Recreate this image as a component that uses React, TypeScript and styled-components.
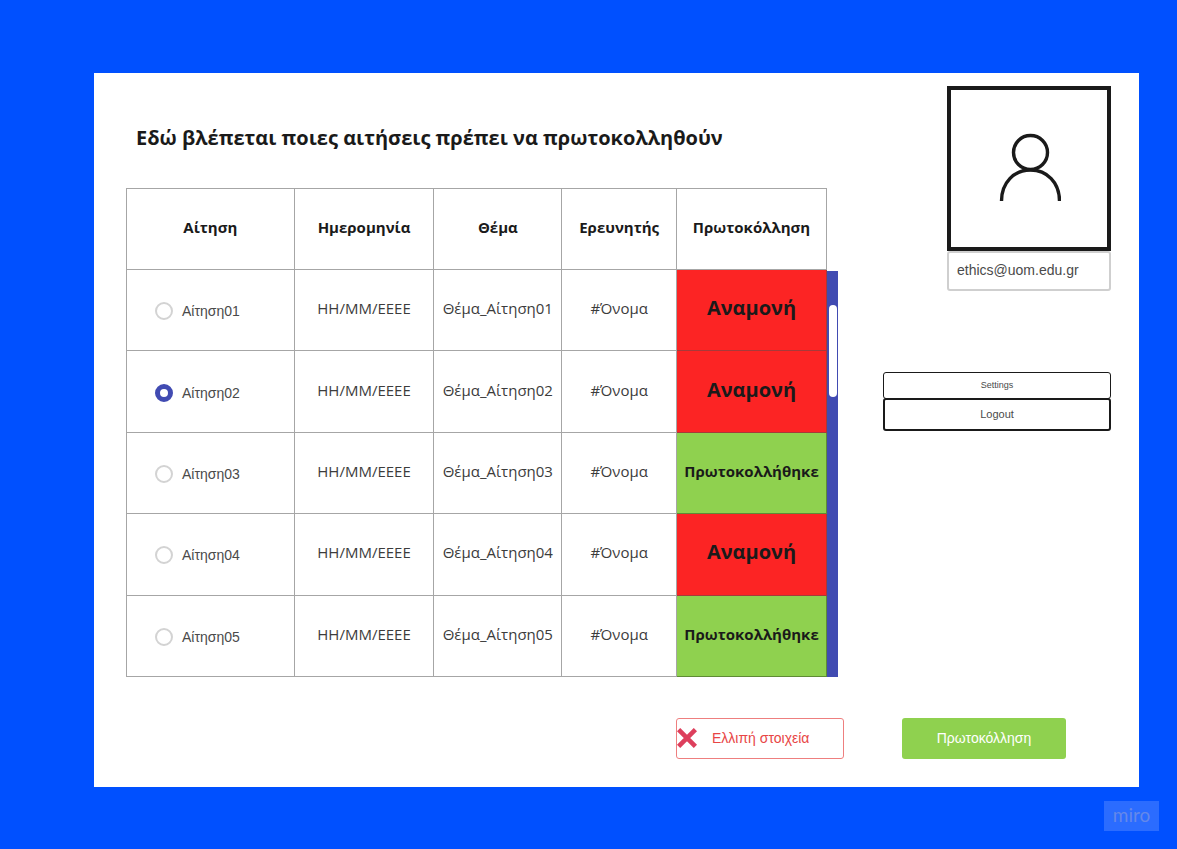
import React, { useState } from "react";
import styled, { createGlobalStyle } from "styled-components";

const GlobalStyle = createGlobalStyle`
  *, *::before, *::after { box-sizing: border-box; }
  body {
    margin: 0;
    background: #0050ff;
    color: #1a1a1a;
    font-family: "Open Sans", "Noto Sans", sans-serif;
  }
  button, input { font-family: inherit; color: inherit; }
`;

const uiFont = `"Liberation Sans", Arial, sans-serif`;

const Page = styled.div`
  min-height: 100vh;
  display: flex;
  flex-direction: column;
  padding: 73px 18px 18px 94px;
`;

const Sheet = styled.main`
  flex: 1;
  display: flex;
  flex-direction: column;
  margin-right: 20px;
  padding: 13px 28px 28px 32px;
  background: #ffffff;
`;

const Columns = styled.div`
  display: flex;
  gap: 45px;
`;

const Requests = styled.section`
  flex: 1;
  min-width: 0;
  padding-top: 38px;
`;

const Title = styled.h1`
  margin: 0 0 36px;
  padding-left: 10px;
  font-size: 20px;
  line-height: 28px;
  font-weight: 700;
`;

const TableArea = styled.div`
  display: flex;
`;

const Table = styled.table`
  flex: 1;
  height: 489px;
  table-layout: fixed;
  border-collapse: collapse;
`;

const Col = styled.col<{ $width: number }>`
  width: ${(p) => p.$width}px;
`;

const Row = styled.tr`
  height: 81px;
`;

const HeadCell = styled.th`
  padding: 0 0 4px;
  border: 1px solid #a6a6a6;
  font-size: 15px;
  line-height: 20px;
  font-weight: 700;
`;

const Cell = styled.td`
  padding: 0 0 4px;
  border: 1px solid #a6a6a6;
  color: #3c3c3c;
  font-size: 15px;
  line-height: 20px;
  text-align: center;
`;

const StatusCell = styled(Cell)<{ $done: boolean }>`
  background: ${(p) => (p.$done ? "#8fd14f" : "#fc2424")};
  border-color: ${(p) => (p.$done ? "#5f8b35" : "#a63a3a")};
  color: #1a1a1a;
  font-size: ${(p) => (p.$done ? 15 : 20)}px;
  font-weight: 700;
`;

const PickCell = styled(Cell)`
  padding: 2px 0 0 28px;
`;

const Pick = styled.label`
  display: flex;
  align-items: center;
  gap: 9px;
  font-family: ${uiFont};
  font-size: 14px;
  color: #4a4a4a;
`;

const Radio = styled.input`
  appearance: none;
  width: 18px;
  height: 18px;
  margin: 0;
  border: 2px solid #d3d3d3;
  border-radius: 50%;
  background: #ffffff;
  &:checked { border: 5px solid #414bb2; }
`;

const Track = styled.div`
  width: 11px;
  margin-top: 83px;
  padding: 34px 1px 0 2px;
  background: #414bb2;
`;

const Thumb = styled.div`
  height: 92px;
  border-radius: 4px;
  background: #ffffff;
`;

const Aside = styled.aside`
  width: 228px;
  display: flex;
  flex-direction: column;
`;

const Profile = styled.div`
  width: 164px;
  align-self: flex-end;
  display: flex;
  flex-direction: column;
  margin-bottom: 81px;
`;

const Avatar = styled.div`
  height: 165px;
  display: flex;
  align-items: center;
  justify-content: center;
  border: 4px solid #1a1a1a;
`;

const Email = styled.input`
  width: 100%;
  height: 40px;
  padding: 0 8px 2px;
  border: 2px solid #cfcfcf;
  border-radius: 3px;
  font-family: ${uiFont};
  font-size: 14px;
  color: #4a4a4a;
`;

const MenuButton = styled.button`
  height: 27px;
  padding: 0 0 2px;
  border: 1px solid #1a1a1a;
  border-radius: 3px;
  background: #ffffff;
  color: #4a4a4a;
  font-family: ${uiFont};
  font-size: 9px;
`;

const LogoutButton = styled(MenuButton)`
  height: 33px;
  margin-top: -1px;
  border-width: 2px;
  font-size: 11px;
`;

const Actions = styled.div`
  display: flex;
  justify-content: flex-end;
  gap: 58px;
  margin-top: 41px;
  padding-right: 45px;
`;

const ActionButton = styled.button`
  height: 41px;
  padding: 0 0 2px;
  border-radius: 3px;
  font-family: ${uiFont};
  font-size: 14px;
`;

const RejectButton = styled(ActionButton)`
  width: 168px;
  display: flex;
  align-items: center;
  gap: 15px;
  border: 1px solid #ee7f7f;
  background: #ffffff;
  color: #e84545;
`;

const ConfirmButton = styled(ActionButton)`
  width: 164px;
  border: 0;
  background: #8fd14f;
  color: #ffffff;
`;

const Watermark = styled.div`
  align-self: flex-end;
  width: 55px;
  height: 30px;
  margin-top: 14px;
  background: #2b6cff;
  color: #6488ea;
  font-family: Lato, sans-serif;
  font-size: 19px;
  line-height: 28px;
  text-align: center;
`;

const columns = [
  { label: "Αίτηση", width: 168 },
  { label: "Ημερομηνία", width: 140 },
  { label: "Θέμα", width: 128 },
  { label: "Ερευνητής", width: 115 },
  { label: "Πρωτοκόλληση", width: 150 },
];

const requests = [
  { id: "01", done: false },
  { id: "02", done: false },
  { id: "03", done: true },
  { id: "04", done: false },
  { id: "05", done: true },
];

export default function App() {
  const [selected, setSelected] = useState("02");
  return (
    <Page>
      <GlobalStyle />
      <Sheet>
        <Columns>
          <Requests>
            <Title>Εδώ βλέπεται ποιες αιτήσεις πρέπει να πρωτοκολληθούν</Title>
            <TableArea>
              <Table>
                <colgroup>
                  {columns.map((c) => <Col key={c.label} $width={c.width} />)}
                </colgroup>
                <thead>
                  <Row>
                    {columns.map((c) => <HeadCell key={c.label} scope="col">{c.label}</HeadCell>)}
                  </Row>
                </thead>
                <tbody>
                  {requests.map(({ id, done }) => (
                    <Row key={id}>
                      <PickCell>
                        <Pick>
                          <Radio
                            type="radio"
                            name="request"
                            value={id}
                            checked={selected === id}
                            onChange={() => setSelected(id)}
                          />
                          Αίτηση{id}
                        </Pick>
                      </PickCell>
                      <Cell>HH/MM/EEEE</Cell>
                      <Cell>Θέμα_Αίτηση{id}</Cell>
                      <Cell>#Όνομα</Cell>
                      <StatusCell $done={done}>{done ? "Πρωτοκολλήθηκε" : "Αναμονή"}</StatusCell>
                    </Row>
                  ))}
                </tbody>
              </Table>
              <Track>
                <Thumb />
              </Track>
            </TableArea>
          </Requests>
          <Aside>
            <Profile>
              <Avatar>
                <svg width="64" height="72" viewBox="0 0 64 72" fill="none" stroke="#1a1a1a" strokeWidth="3.4" aria-hidden="true">
                  <circle cx="33.500" cy="19.500" r="17" />
                  <path d="M4.500 68C4.500 49.500 17 37 33.500 37S62.500 49.500 62.500 68" />
                </svg>
              </Avatar>
              <Email type="email" aria-label="Email" defaultValue="ethics@uom.edu.gr" />
            </Profile>
            <MenuButton type="button">Settings</MenuButton>
            <LogoutButton type="button">Logout</LogoutButton>
          </Aside>
        </Columns>
        <Actions>
          <RejectButton type="button">
            <svg width="20" height="20" viewBox="0 0 20 20" stroke="#dd3f5c" strokeWidth="4.6" aria-hidden="true">
              <path d="M1.600 1.600L18.400 18.400M18.400 1.600L1.600 18.400" />
            </svg>
            Ελλιπή στοιχεία
          </RejectButton>
          <ConfirmButton type="button">Πρωτοκόλληση</ConfirmButton>
        </Actions>
      </Sheet>
      <Watermark>miro</Watermark>
    </Page>
  );
}
